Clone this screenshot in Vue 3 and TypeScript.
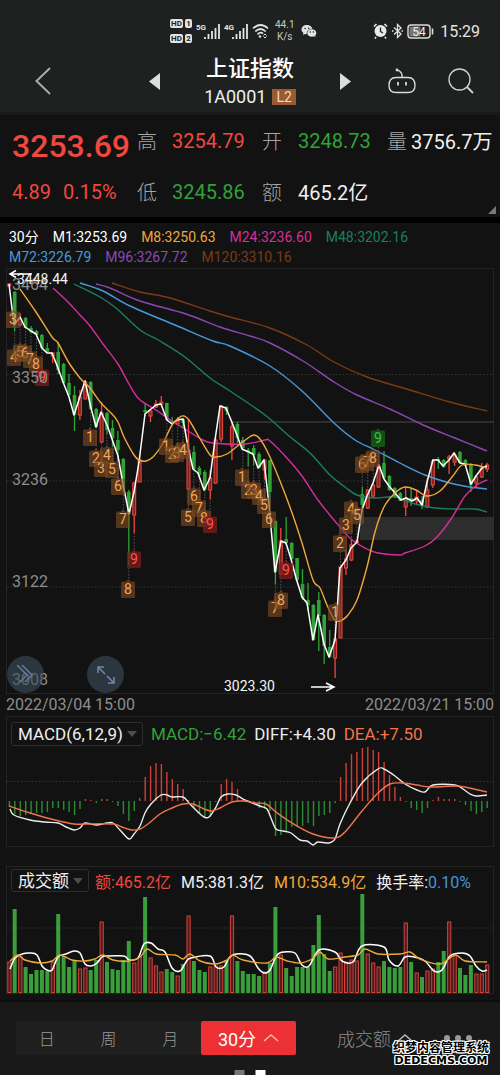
<script setup lang="ts">
import { ref } from 'vue'

type Point = [number, number]
type Dir = 'up' | 'down'

interface Candle { x: number; dir: Dir; high: number; top: number; bottom: number; low: number }
interface Badge { x: number; y: number; n: number; kind: string }

const STEP = 5.43
const FIRST = 9.3
const xAt = (i: number): number => Math.round((FIRST + STEP * i) * 10) / 10

// Each row: direction, high, body top, body bottom, low
const candleRows = `
r 283 284 286 286|g 291 292 325 331|r 313 319 325 326|g 317 318 328 328|g 326 328 332 333|g 330 331 335 336
g 334 335 348 349|g 343 348 352 353|r 352 353 356 363|g 342 352 370 374|g 363 364 383 384|g 374 383 395 397
g 386 395 415 431|r 390 397 415 420|r 380 382 399 399|g 381 382 409 409|g 408 409 427 427|r 402 413 442 443
g 412 413 430 434|g 420 428 438 446|g 431 440 450 461|g 458 459 490 492|g 490 492 514 565|r 482 483 515 533
r 455 460 482 482|g 404 410 412 416|r 409 411 416 422|r 400 404 407 408|r 396 402 404 405|g 403 403 420 420
g 417 421 424 424|r 417 421 424 424|g 418 419 423 427|r 419 450 489 490|g 446 452 469 470|g 466 468 475 478
g 470 472 490 491|r 470 478 490 499|r 437 440 483 484|r 405 406 439 442|g 406 407 411 415|r 421 427 446 460
g 422 424 438 443|g 437 440 448 450|g 448 450 452 466|g 445 448 455 465|g 452 454 468 468|r 459 460 470 479
g 460 460 492 506|g 520 521 572 584|r 528 541 574 575|g 517 539 543 545|g 542 543 559 560|g 558 558 580 581
g 569 584 598 600|g 583 600 605 610|g 604 605 640 640|g 592 600 616 651|g 614 615 646 664|g 630 647 657 658
r 638 639 658 678|r 567 567 638 638|r 550 559 568 575|r 540 545 560 561|r 540 541 543 544|g 487 494 505 512
r 489 490 508 509|r 484 485 496 498|r 464 466 487 488|g 451 463 478 479|g 475 476 490 491|g 487 488 497 498
g 492 493 501 501|r 487 498 507 516|g 489 498 501 506|r 491 497 501 504|g 496 500 505 509|r 478 490 507 508
r 459 461 485 488|g 457 459 461 469|g 459 460 467 468|r 455 457 459 474|r 452 455 462 466|g 451 452 463 463
g 459 460 466 466|g 463 464 485 492|r 475 477 483 488|r 463 468 477 478|r 463 465 469 472`

const candles: Candle[] = candleRows.trim().split(/[|\n]/).map((row, i) => {
  const [d, high, top, bottom, low] = row.trim().split(' ')
  return { x: xAt(i), dir: d === 'r' ? 'up' : 'down', high: +high, top: +top, bottom: +bottom, low: +low }
})

const pts = (s: string): Point[] => s.trim().split(/\s+/).map((p) => p.split(',').map(Number) as Point)

const straight = (s: string): string => 'M' + pts(s).map((p) => p.join(' ')).join('L')

// Catmull-Rom spline through the given points
const smooth = (s: string): string => {
  const p = pts(s)
  let d = `M${p[0][0]} ${p[0][1]}`
  for (let i = 0; i < p.length - 1; i++) {
    const a = p[i - 1] ?? p[i]
    const b = p[i]
    const c = p[i + 1]
    const e = p[i + 2] ?? c
    const f = (v: number) => v.toFixed(1)
    d += `C${f(b[0] + (c[0] - a[0]) / 6)} ${f(b[1] + (c[1] - a[1]) / 6)} ${f(c[0] - (e[0] - b[0]) / 6)} ${f(c[1] - (e[1] - b[1]) / 6)} ${c[0]} ${c[1]}`
  }
  return d
}

const averages = [
  { name: 'm120', d: smooth('112,283 140,292 170,298 210,311 230,317 270,328 307,345 334,362 367,377 410,390 450,402 487,411') },
  { name: 'm96', d: smooth('96,284 110,288 140,301 186,314 220,327 250,336 270,343 303,361 334,382 357,395 390,409 423,425 455,438 487,451') },
  { name: 'm72', d: smooth('80,283 103,291 130,306 175,325 213,341 230,346 270,366 302,391 334,423 355,440 375,450 400,463 425,475 450,483 470,487 487,489') },
  { name: 'm48', d: smooth('74,284 100,297 116,308 140,330 160,341 185,357 210,378 230,391 265,415 289,436 310,453 330,475 345,487 357,495 375,498 395,497 415,504 435,508 455,509 475,509 487,512') },
  { name: 'm24', d: smooth('53,288 68,302 80,315 90,326 103,344 118,364 129,384 139,399 156,410 172,421 188,431 203,440 213,443 245,444 265,440 270,441 286,457 302,476 318,500 334,520 351,539 367,549 378,553 400,555 405,553 425,546 437,537 451,519 465,496 477,485 487,480') },
  { name: 'm1', d: straight('9,284 14,325 20,317 25,327 31,331 36,334 42,348 47,353 52,353 58,368 63,382 69,397 74,415 85,381 91,408 96,427 101,412 107,425 112,439 118,456 123,484 129,514 134,492 139,462 145,414 151,409 156,405 161,404 167,420 172,424 177,420 183,419 188,447 193,469 198,473 204,490 210,478 215,440 220,406 226,408 231,420 237,435 242,449 253,454 258,468 264,460 269,505 275,572 281,541 286,543 291,559 296,578 302,597 307,603 313,640 318,615 324,644 329,657 335,640 340,568 346,560 351,548 357,542 362,510 367,496 373,483 379,465 384,479 389,486 395,493 401,500 406,498 412,501 417,498 422,505 427,482 433,460 438,460 443,466 449,460 454,453 460,463 465,464 471,484 476,476 482,468 487,466') },
  { name: 'm8', d: smooth('20,289 36,312 52,337 58,343 69,363 80,378 90,388 101,403 112,414 118,422 124,437 134,455 139,460 146,461 153,457 162,445 172,425 180,417 184,416 189,420 199,437 210,455 216,457 227,454 240,444 248,438 254,435 260,439 269,455 280,481 291,510 302,543 313,580 320,588 327,605 334,619 340,621 348,615 357,600 367,567 375,532 384,507 395,493 405,487 416,490 427,496 440,491 452,477 462,465 475,465 487,468') },
]

const badgeRows: [number, number, number, string?][] = [
  [13, 319, 3], [14, 357, 4], [20, 352, 5], [25, 353, 6], [30, 359, 7], [36, 364, 8], [42, 377, 9, 'hot'],
  [90, 437, 1], [96, 458, 2], [101, 468, 3], [107, 455, 4], [112, 469, 5], [118, 486, 6], [123, 519, 7],
  [128, 589, 8], [134, 559, 9, 'hot'], [166, 446, 1], [172, 454, 2], [177, 453, 3], [183, 450, 4],
  [188, 517, 5], [194, 496, 6], [199, 508, 7], [204, 518, 8], [210, 524, 9, 'hot'], [242, 477, 1],
  [248, 490, 2], [254, 490, 3], [259, 496, 4], [264, 505, 5], [269, 519, 6], [275, 608, 7], [281, 600, 8],
  [286, 570, 9, 'hot'], [335, 612, 1], [340, 543, 2], [346, 525, 3], [351, 509, 4], [357, 515, 5],
  [362, 464, 6], [367, 462, 7], [373, 458, 8], [378, 438, 9, 'cool'],
]
const badges: Badge[] = badgeRows.map(([x, y, n, kind]) => ({ x, y, n, kind: kind ?? 'warm' }))

const stems = badges.map((b) => {
  const c = candles[Math.round((b.x - FIRST) / STEP)]
  return { x: c.x, y1: b.y > c.low ? c.low : b.y, y2: b.y > c.low ? b.y : c.high }
})

const levels = [
  { y: 290, text: '3464' }, { y: 383, text: '3350' }, { y: 485, text: '3236' },
  { y: 587, text: '3122' }, { y: 685, text: '3008' },
]

const macdBars = [
  -6, -13, -15, -14, -12, -12, -12, -11, -7, -7, -9, -11, -14, -8, 2, 1, -2, 2, 2, -1, -5, -13, -20, -10, 3, 24,
  35, 38, 37, 29, 22, 17, 12, 1, -7, -13, -16, -16, -1, 17, 22, 19, 12, 2, -1, -2, -7, -8, -10, -35, -34, -30,
  -26, -26, -25, -22, -25, -15, -14, -12, -2, 24, 38, 47, 49, 53, 54, 51, 49, 39, 26, 14, 4, -1, -7, -9, -12,
  -7, 1, 4, 2, 2, 2, -1, -4, -10, -13, -11, -7,
].map((h, i) => ({ x: xAt(i), y: h > 0 ? 801 - h : 801, h: Math.abs(h), dir: h > 0 ? 'up' : 'down' }))

const diffLine = smooth('10,809 14,815 30,820 45,822 58,823 66,827 74,830 80,828 85,823 96,825 107,823 113,823 120,830 129,839 134,834 140,826 145,813 151,804 161,795 167,795 172,797 183,797 190,804 199,813 204,817 209,817 216,807 221,797 228,794 236,795 243,799 250,802 260,806 267,809 271,818 276,829 283,831 291,833 300,840 307,841 313,845 318,842 329,843 335,839 340,824 350,803 362,783 378,769 384,769 395,776 405,784 417,790 425,792 433,785 455,785 463,789 470,794 476,796 487,795')
const deaLine = smooth('9,806 30,813 55,820 74,824 85,824 113,824 122,827 132,830 140,829 148,824 160,814 172,808 183,804 193,804 204,809 212,811 220,808 232,802 243,801 255,803 266,804 276,812 292,823 313,834 334,838 345,832 362,811 378,793 390,784 402,783 417,785 430,787 455,786 465,787 487,792')

const volumeBars = (
  'r31 g84 r37 g26 g19 g23 g23 g22 r31 g79 g37 g26 g33 r24 r25 g23 g33 r71 g31 g24 g23 g33 g52 r30 r36 g96 r35 r27 r21 g24 ' +
  'g21 r17 g29 r77 g32 g23 g21 r26 r27 r27 g33 r77 g32 g22 g19 g19 g17 r21 g30 g86 r38 g25 g17 g26 g26 g26 g48 g78 g39 ' +
  'g22 r26 r40 r31 r33 r32 g99 r39 r30 r26 g32 g26 g25 g26 r70 g31 r20 g16 r22 r24 g31 g42 r71 r37 g25 g18 g28 r19 r19 r28'
).split(' ').map((s, i) => ({ x: xAt(i), h: +s.slice(1), dir: s[0] === 'r' ? 'up' : 'down' }))

const vol5 = smooth('10,969 15,958 22,954 30,953 37,955 42,966 47,970 52,970 58,957 66,954 74,951 80,953 85,964 91,966 97,963 102,957 107,956 124,956 129,960 138,958 144,944 151,943 158,949 165,952 172,968 180,971 186,962 191,958 210,956 216,967 224,967 229,958 236,954 250,956 258,968 264,973 270,970 277,955 285,952 295,953 302,965 309,966 319,950 335,952 342,961 353,962 362,946 384,947 389,960 398,966 405,957 414,957 425,961 434,971 442,970 450,956 462,953 470,956 476,966 482,971 487,970')
const vol10 = smooth('10,961 18,955 25,960 40,963 52,961 60,955 72,960 85,961 95,959 103,955 113,960 129,961 140,957 147,949 156,954 175,955 183,959 190,954 200,961 215,964 227,960 233,955 243,960 267,963 276,957 287,961 300,963 312,959 320,952 328,959 345,957 358,955 365,949 378,954 400,954 410,952 420,959 440,964 455,955 465,961 487,962')

const legend = [
  [{ c: 'm1', t: '30分' }, { c: 'm1', t: 'M1:3253.69' }, { c: 'm8', t: 'M8:3250.63' }, { c: 'm24', t: 'M24:3236.60' }, { c: 'm48', t: 'M48:3202.16' }],
  [{ c: 'm72', t: 'M72:3226.79' }, { c: 'm96', t: 'M96:3267.72' }, { c: 'm120', t: 'M120:3310.16' }],
]

const periods = ['日', '周', '月']
const period = ref('30分')
const indicator = ref('MACD(6,12,9)')
const subIndicator = ref('成交额')
</script>

<template>
  <main class="app">
    <header class="top">
      <div class="status">
        <div class="status-left">
          <svg width="22" height="26" viewBox="0 0 22 26">
            <g fill="#e4e4e4">
              <rect x="0" y="1" width="13" height="9" rx="2" /><rect x="15" y="1" width="7" height="9" rx="2" />
              <rect x="0" y="16" width="13" height="9" rx="2" /><rect x="15" y="16" width="7" height="9" rx="2" />
            </g>
            <g class="chip-text">
              <text x="6.500" y="8">HD</text><text x="18.500" y="8">1</text>
              <text x="6.500" y="23">HD</text><text x="18.500" y="23">2</text>
            </g>
          </svg>
          <svg width="24" height="18" viewBox="0 0 24 18">
            <text class="net" x="0" y="8">5G</text>
            <path d="M9 17v-2M12.500 17v-5M16 17V9M19.500 17V6M23 17V2" stroke="#e4e4e4" stroke-width="1.800" />
          </svg>
          <svg width="24" height="18" viewBox="0 0 24 18">
            <text class="net" x="0" y="8">4G</text>
            <path d="M9 17v-2M12.500 17v-5M16 17V9M19.500 17V6M23 17V2" stroke="#e4e4e4" stroke-width="1.800" />
          </svg>
          <svg width="17" height="16" viewBox="0 0 17 16" fill="none" stroke="#e4e4e4" stroke-width="1.700">
            <path d="M1 5.500Q8.500-1.500 16 5.500M3.300 8.500Q8.500 3.500 13.700 8.500M5.500 11.300q3-2.800 5.500-.6" />
            <circle cx="8" cy="13.500" r="1.200" fill="#e4e4e4" stroke="none" />
            <path d="M11.500 12.500l1.500-1.500 1.500 1.500M11.500 13.500l1.500 1.500 1.500-1.500" stroke-width="1" />
          </svg>
          <div class="rate"><span>44.1</span><span>K/s</span></div>
          <svg width="16" height="14" viewBox="0 0 16 14">
            <path d="M6 1C2.800 1 .5 3 .5 5.600c0 1.500.8 2.700 2 3.500L2 11l2-1 1.700.3C5.300 7 8 4.700 11.400 4.800 10.800 2.500 8.600 1 6 1z" fill="#e4e4e4" />
            <ellipse cx="10.800" cy="9" rx="4.500" ry="3.800" fill="#e4e4e4" />
            <path d="M13 12l1.500 1.200-.3-2z" fill="#e4e4e4" />
            <g fill="#1f2121"><circle cx="4.200" cy="4.500" r=".8" /><circle cx="7.700" cy="4.300" r=".8" /><circle cx="9.300" cy="8" r=".7" /><circle cx="12.300" cy="8" r=".7" /></g>
          </svg>
        </div>
        <div class="status-right">
          <svg width="15" height="16" viewBox="0 0 15 16">
            <circle cx="7.500" cy="8" r="6" fill="#e9e9e9" />
            <path d="M1 3.500L3.500 1M14 3.500L11.500 1M3 14l-1 1.500M12 14l1 1.500" stroke="#e9e9e9" stroke-width="1.600" />
            <path d="M7.500 4.500V8.500l2.500 1.500" fill="none" stroke="#1f2121" stroke-width="1.300" />
          </svg>
          <svg width="11" height="16" viewBox="0 0 11 16" fill="none" stroke="#e4e4e4" stroke-width="1.300">
            <path d="M2 4.500l7 6.500-3.500 3.500v-13L9 5l-7 6.500" />
            <path d="M0 8h1.500M9.500 8H11" />
          </svg>
          <svg width="27" height="15" viewBox="0 0 27 15">
            <rect x="1" y="1" width="22" height="13" rx="3" fill="none" stroke="#dcdcdc" stroke-width="1.400" />
            <rect x="2.500" y="2.500" width="11" height="10" rx="1" fill="#747776" />
            <path d="M25.500 4.500v6" stroke="#dcdcdc" stroke-width="1.600" />
            <text class="battery" x="12" y="11.500">54</text>
          </svg>
          <time>15:29</time>
        </div>
      </div>
      <nav class="nav">
        <button class="icon back" aria-label="返回">
          <svg width="16" height="28" viewBox="0 0 16 28" fill="none" stroke="#aaa" stroke-width="2"><path d="M15 1L1.500 14 15 27" /></svg>
        </button>
        <div class="switcher">
          <button class="icon" aria-label="上一个"><svg width="11" height="17" viewBox="0 0 11 17"><path d="M11 0v17L0 8.500z" fill="#dcdddd" /></svg></button>
          <div class="name">
            <h1>上证指数</h1>
            <div class="code"><span>1A0001</span><em>L2</em></div>
          </div>
          <button class="icon" aria-label="下一个"><svg width="11" height="17" viewBox="0 0 11 17"><path d="M0 0v17l11-8.500z" fill="#dcdddd" /></svg></button>
        </div>
        <div class="tools">
          <button class="icon" aria-label="助手">
            <svg width="28" height="26" viewBox="0 0 28 26" fill="none" stroke="#dcdcdc" stroke-width="1.300">
              <path d="M8 9.500h12c4.500 0 7 3.200 7 8 0 4.500-2 7-7 7H8c-5 0-7-2.500-7-7 0-4.800 2.500-8 7-8z" />
              <path d="M14 9.500C14.500 6 13 3.500 9.500 2.200" />
              <circle cx="9" cy="2" r="1.400" fill="#dcdcdc" stroke="none" />
              <path d="M10 14v3.500M18 14v3.500" stroke-width="1.800" />
            </svg>
          </button>
          <button class="icon" aria-label="搜索">
            <svg width="26" height="26" viewBox="0 0 26 26" fill="none" stroke="#d2d2d2" stroke-width="1.300">
              <circle cx="11.500" cy="11.500" r="10.500" /><path d="M19 19l6 6" stroke-width="1.800" />
            </svg>
          </button>
        </div>
      </nav>
    </header>

    <section class="quote">
      <strong class="price up">3253.69</strong>
      <span class="label">高</span><span class="up">3254.79</span>
      <span class="label">开</span><span class="down">3248.73</span>
      <span class="label">量</span><span>3756.7万</span>
      <span class="change up"><span>4.89</span><span>0.15%</span></span>
      <span class="label">低</span><span class="down">3245.86</span>
      <span class="label">额</span><span>465.2亿</span>
      <i class="corner"></i>
    </section>

    <section class="legend">
      <div v-for="(row, r) in legend" :key="r" class="legend-row">
        <span v-for="item in row" :key="item.t" :class="item.c">{{ item.t }}</span>
      </div>
    </section>

    <section class="pane">
      <svg class="plot" viewBox="7 269 486 424">
        <rect x="360" y="517" width="134" height="23" fill="#2d2d2d" />
        <g class="dots"><path d="M7 374.500H494M7 481H494M7 587H494" /></g>
        <path d="M232 422H494" stroke="#2e2e2e" stroke-width="2" />
        <path d="M340 638.500H494" stroke="#242424" />
        <path v-for="(s, i) in stems" :key="'s' + i" :d="`M${s.x} ${s.y1}V${s.y2}`" class="stem" />
        <g v-for="(c, i) in candles" :key="'c' + i" :class="c.dir">
          <path :d="`M${c.x} ${c.high}V${c.top}M${c.x} ${c.bottom}V${c.low}`" class="wick" />
          <rect v-if="c.dir === 'up'" :x="c.x - 1.5" :y="c.top" width="3" :height="c.bottom - c.top" class="hollow" />
          <rect v-else :x="c.x - 1.8" :y="c.top" width="3.600" :height="c.bottom - c.top" class="solid" />
        </g>
        <path v-for="a in averages" :key="a.name" :class="['line', a.name]" :d="a.d" />
        <g v-for="(b, i) in badges" :key="'b' + i" :class="['badge', b.kind]" :transform="`translate(${b.x} ${b.y})`">
          <path d="M-7-6q0-1.500 1.500-1.500H-2L0-10 2-7.500H5.500Q7-7.500 7-6V7.500Q7 9 5.500 9H-5.500Q-7 9-7 7.500z" />
          <text y="5">{{ b.n }}</text>
        </g>
        <g class="levels"><text v-for="l in levels" :key="l.text" x="12" :y="l.y">{{ l.text }}</text></g>
        <g class="extreme">
          <text x="17" y="284">3448.44</text><path d="M32 274H10M16 270.500L10 274l6 3.500" />
          <text x="224" y="691">3023.30</text><path d="M311 687h23M326 683l8 4-8 4" />
        </g>
      </svg>
      <button class="round first" aria-label="展开">
        <svg width="20" height="20" viewBox="0 0 20 20" fill="none" stroke="#63799a" stroke-width="1.500"><path d="M1 0l10 10-7 7M6 0l10 10-7 7" /></svg>
      </button>
      <button class="round second" aria-label="全屏">
        <svg width="20" height="20" viewBox="0 0 20 20" fill="none" stroke="#7385a6" stroke-width="1.600"><path d="M9 9L2 2M8 2H2v6M11 11l7 7M12 18h6v-6" /></svg>
      </button>
    </section>
    <div class="dates"><time>2022/03/04 15:00</time><time>2022/03/21 15:00</time></div>

    <section class="pane macd">
      <div class="pane-head">
        <label class="picker">
          <select v-model="indicator" aria-label="指标"><option>MACD(6,12,9)</option></select>
          <svg width="10" height="6" viewBox="0 0 10 6"><path d="M0 0h10L5 6z" fill="#4c4c4c" /></svg>
        </label>
        <span class="down">MACD:−6.42</span><span class="diff">DIFF:+4.30</span><span class="dea">DEA:+7.50</span>
      </div>
      <svg class="plot" viewBox="7 747 486 99">
        <g class="dots"><path d="M7 781.500H494" /></g>
        <rect v-for="(b, i) in macdBars" :key="i" :class="['solid', 'dim', b.dir]" :x="b.x - 0.6" :y="b.y" width="1.400" :height="b.h" />
        <path class="line diff" :d="diffLine" />
        <path class="line dea" :d="deaLine" />
      </svg>
    </section>

    <section class="pane volume">
      <div class="pane-head">
        <label class="picker">
          <select v-model="subIndicator" aria-label="副图指标"><option>成交额</option></select>
          <svg width="10" height="6" viewBox="0 0 10 6"><path d="M0 0h10L5 6z" fill="#4c4c4c" /></svg>
        </label>
        <span class="up">额:465.2亿</span><span>M5:381.3亿</span><span class="m8">M10:534.9亿</span>
        <span>换手率:<b>0.10%</b></span>
      </div>
      <svg class="plot" viewBox="7 893 486 100">
        <g class="dots"><path d="M7 928H494" /></g>
        <template v-for="(b, i) in volumeBars" :key="i">
          <rect v-if="b.dir === 'up'" class="vol-up" :x="b.x - 1.5" :y="993 - b.h" width="3.200" :height="b.h - 0.5" />
          <rect v-else class="vol-down" :x="b.x - 2" :y="993 - b.h" width="4" :height="b.h" />
        </template>
        <path class="line m1" :d="vol5" />
        <path class="line m8" :d="vol10" />
      </svg>
    </section>

    <footer class="bottom">
      <div class="tabs">
        <button v-for="p in periods" :key="p" class="tab" @click="period = p">{{ p }}</button>
        <button class="tab active" @click="period = '30分'">
          30分<svg width="16" height="8" viewBox="0 0 16 8" fill="none" stroke="#ffb4ae" stroke-width="1.500"><path d="M1 7l7-6 7 6" /></svg>
        </button>
      </div>
      <button class="more metric">
        成交额<svg width="16" height="8" viewBox="0 0 16 8" fill="none" stroke="#bbb" stroke-width="1.500"><path d="M1 7l7-6 7 6" /></svg>
      </button>
      <button class="more menu" aria-label="更多">
        <svg width="28" height="6" viewBox="0 0 28 6" fill="#999"><circle cx="3" cy="3" r="3" /><circle cx="14" cy="3" r="3" /><circle cx="25" cy="3" r="3" /></svg>
      </button>
      <div class="pager"><i></i><i class="on"></i></div>
      <div class="mark"><span>织梦内容管理系统</span><span class="latin">DEDECMS.COM</span></div>
    </footer>
  </main>
</template>

<style>
html, body { background: #121212; }
</style>

<style scoped>
.app {
  background: #121212;
  color: #f0f0f0;
  font-family: Roboto, "Noto Sans CJK SC", sans-serif;
  font-size: 16px;
}
.app * { box-sizing: border-box; }
svg { display: block; flex: none; }
button, select { font: inherit; color: inherit; background: none; border: 0; padding: 0; margin: 0; }
.icon { display: block; }

.top { background: #1f2121; border-bottom: 3px solid #181919; }
.status { display: flex; justify-content: space-between; align-items: center; height: 52px; padding: 10px 20px 0 34%; color: #e4e4e4; }
.status-left { display: flex; align-items: center; gap: 4px; }
.status-right { display: flex; align-items: center; gap: 4px; font-size: 16px; }
.status-right time { margin-left: 2px; }
.chip-text { font-size: 8px; font-weight: 700; fill: #1f2121; text-anchor: middle; }
.net { font-size: 8px; font-weight: 700; fill: #e4e4e4; }
.battery { font-size: 12px; fill: #eee; text-anchor: middle; }
.rate { display: flex; flex-direction: column; align-items: center; font-size: 10px; line-height: 12px; color: #c8c8c8; margin: 0 2px; }

.nav { display: grid; grid-template-columns: 1fr auto 1fr; align-items: center; height: 60px; padding: 0 26px 2px; }
.nav .back { padding-left: 9px; justify-self: start; }
.switcher { display: flex; align-items: center; gap: 44px; }
.name { text-align: center; }
.name h1 { margin: 0; font-size: 22px; line-height: 32px; font-weight: 500; color: #fff; }
.code { display: flex; align-items: center; justify-content: space-between; gap: 6px; font-size: 18px; line-height: 24px; }
.code em { font-style: normal; font-size: 14px; line-height: 16px; padding: 0 4px; background: #985b34; color: #f6dcb8; }
.tools { display: flex; justify-content: flex-end; align-items: center; gap: 32px; }

.up { color: #f0483f; }
.down { color: #30a338; }
.quote {
  position: relative;
  display: grid;
  grid-template-columns: 125fr 35fr 90fr 36fr 89fr 24fr 82fr;
  grid-template-rows: 51px 51px;
  align-items: center;
  padding: 0 7px 0 12px;
  border-bottom: 6px solid #000;
  font-size: 20px;
  white-space: nowrap;
}
.price { font-size: 32px; font-weight: 500; line-height: 40px; align-self: end; }
.label { color: #a5a5a5; font-weight: 300; }
.change { display: flex; gap: 12px; }
.corner { position: absolute; right: 4px; bottom: 3px; border: 4px solid; border-color: transparent #777 #777 transparent; padding: 0; }

.legend { padding: 4px 9px 1px; font-size: 14px; line-height: 20px; }
.legend-row { display: flex; flex-wrap: wrap; column-gap: 14px; height: 20px; }
.m1 { color: #fff; }
.m8 { color: #efa83c; }
.m24 { color: #d62e9c; }
.m48 { color: #1c7f5e; }
.m72 { color: #4899dc; }
.m96 { color: #8a48b4; }
.m120 { color: #7d3a14; }

.pane { position: relative; margin: 0 6px; border: 1px solid #242424; }
.plot { width: 100%; height: auto; overflow: visible; }
.line { fill: none; stroke: currentColor; stroke-width: 1.400; stroke-linejoin: round; }
.line.m1 { stroke-width: 1.500; }
.dots path { stroke: #353535; stroke-dasharray: 1.500 2; fill: none; }
.stem { stroke: #555; stroke-dasharray: 1.500 1.500; }
.wick { stroke: currentColor; stroke-width: 1.300; fill: none; }
.hollow { fill: #7c2622; stroke: currentColor; }
.solid { fill: currentColor; }
.dim { opacity: 0.85; }
.vol-up { fill: #531d1c; stroke: #d3423c; }
.vol-down { fill: #389f3b; }
.badge text { font-size: 14px; text-anchor: middle; }
.warm path { fill: #7a4a22; fill-opacity: 0.65; }
.warm text { fill: #f5a558; }
.hot path { fill: #7c1c1c; fill-opacity: 0.75; }
.hot text { fill: #ff5548; }
.cool path { fill: #144f18; }
.cool text { fill: #3fc046; }
.levels text { font-size: 16px; fill: #8d8d8d; }
.extreme text { font-size: 14px; fill: #f4f4f4; }
.extreme path { fill: none; stroke: #fff; stroke-width: 1.500; }
.round { position: absolute; bottom: 0; display: grid; place-items: center; width: 37px; height: 37px; border-radius: 50%; background: rgba(62, 78, 94, 0.6); }
.first { left: 0; }
.second { left: 80px; }
.dates { display: flex; justify-content: space-between; padding: 0 6px; line-height: 22px; color: #8d8d8d; }

.pane-head { display: flex; align-items: center; height: 30px; padding: 0 4px; gap: 8px; font-size: 17px; white-space: nowrap; }
.macd .pane-head { padding-top: 4px; }
.volume { margin-top: 19px; }
.volume .pane-head { height: 26px; padding-top: 1px; gap: 10px; font-size: 16px; }
.volume b { font-weight: 400; color: #4296dc; }
.picker { position: relative; display: flex; align-items: center; gap: 4px; height: 24px; padding: 0 5px 0 6px; border: 1px solid #2e2e2e; border-radius: 3px; font-size: 17px; }
.picker select { appearance: none; line-height: 22px; outline: 0; }
.volume .picker { height: 23px; margin-right: -4px; }
.diff { color: #ececec; }
.dea { color: #f2724b; }

.bottom { position: relative; display: flex; align-items: flex-start; margin-top: 6px; padding: 19px 28px 20px 16px; background: #191919; border-top: 2px solid #0d0d0d; }
.tabs { display: flex; flex: 0 1 280px; background: #1f1f1f; }
.tab { flex: 1; height: 34px; color: #999; font-size: 16px; font-weight: 300; }
.tab.active { display: flex; flex: 0 0 95px; align-items: center; justify-content: center; gap: 7px; border-radius: 2px; background: #ec3033; color: #fff; font-size: 18px; font-weight: 400; }
.more { display: flex; align-items: center; gap: 6px; height: 34px; color: #8c8c8c; font-size: 18px; font-weight: 300; }
.metric { margin-left: 41px; }
.menu { margin-left: auto; }
.pager { position: absolute; bottom: 0; left: 50%; display: flex; gap: 11px; transform: translateX(-50%); }
.pager i { width: 10px; height: 5px; background: #777; }
.pager .on { background: #fff; }
.mark {
  position: absolute; right: 11px; bottom: 8px; display: flex; flex-direction: column; align-items: center;
  color: #000; font-size: 12px; line-height: 14px; font-weight: 700;
  text-shadow: 1px 0 #fff, -1px 0 #fff, 0 1px #fff, 0 -1px #fff, 1px 1px #fff, -1px -1px #fff, 1px -1px #fff, -1px 1px #fff;
}
.latin { font-family: "DejaVu Sans", sans-serif; font-size: 11px; line-height: 12px; }
</style>
